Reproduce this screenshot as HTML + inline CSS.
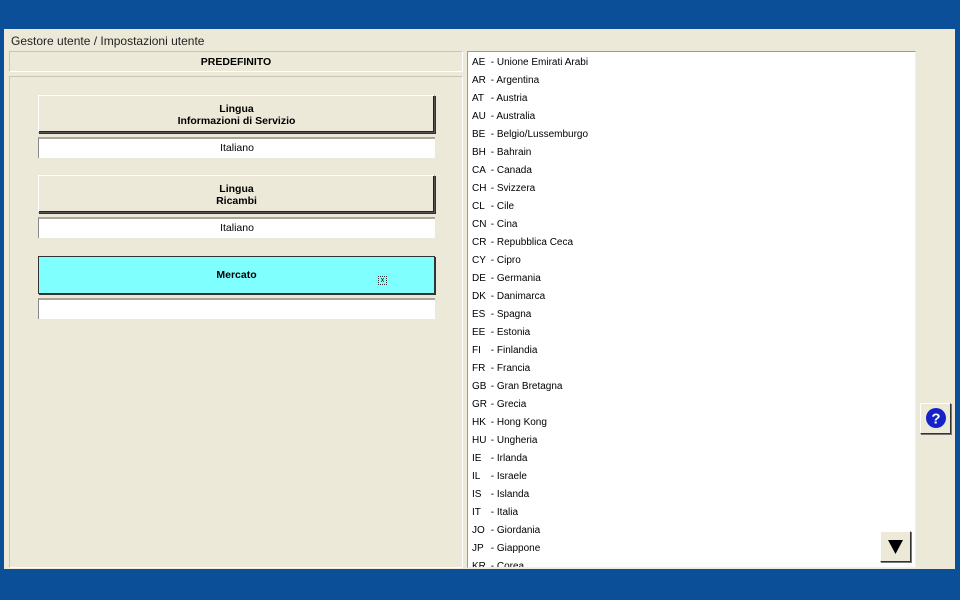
<!DOCTYPE html>
<html><head><meta charset="utf-8"><style>
*{margin:0;padding:0;box-sizing:border-box}
body{width:960px;height:600px;background:#0a4f97;position:relative;overflow:hidden;font-family:"Liberation Sans",sans-serif;font-size:11px;color:#000}
.abs{position:absolute}
#main{left:4px;top:29px;width:951px;height:540px;background:#ece9d8}
.title{left:11px;top:34px;font-size:12px;color:#222}
.hdr{left:9px;top:51px;width:454px;height:21px;border:1px solid #c9c6b6;border-right-color:#fff;border-bottom-color:#fff;text-align:center;font-weight:bold;line-height:21px;font-size:10.5px}
.panel{left:9px;top:76px;width:454px;height:492px;border:1px solid #c9c6b6;border-right-color:#fff;border-bottom-color:#fff}
.btn{left:38px;width:397px;height:38px;background:#ece9d8;border:1px solid #555;border-top-color:#fff;border-left-color:#fff;box-shadow:inset -1px -1px 0 #222,1px 1px 0 #333;text-align:center;font-weight:bold;line-height:12px;padding-top:6px;font-size:10.5px}
.fld{left:38px;width:397px;height:21px;background:#fff;border-top:2px solid #aaa69a;border-left:1px solid #888;text-align:center;line-height:19px;font-size:10.5px}
.list{left:467px;top:51px;width:449px;height:517px;background:#fff;border:1px solid #999;border-right-color:#eee;border-bottom-color:#eee;overflow:hidden;font-size:10px}
.row{position:absolute;left:4px;height:18px;line-height:18px;white-space:nowrap;margin-top:1px}
.row b{font-weight:normal;display:inline-block;width:16px}
</style></head><body>
<div id="main" class="abs"></div>
<div class="abs title">Gestore utente / Impostazioni utente</div>
<div class="abs hdr">PREDEFINITO</div>
<div class="abs panel"></div>
<div class="abs btn" style="top:95px;padding-top:7px">Lingua<br>Informazioni di Servizio</div>
<div class="abs fld" style="top:137px">Italiano</div>
<div class="abs btn" style="top:175px;padding-top:7px">Lingua<br>Ricambi</div>
<div class="abs fld" style="top:217px">Italiano</div>
<div class="abs btn" style="top:256px;background:#80ffff;border-color:#333;box-shadow:1px 1px 0 #333;padding-top:12px">Mercato</div>
<div class="abs" style="left:378px;top:276px;width:9px;height:9px;border:1px dotted #333;font-size:7px;line-height:7px;text-align:center">x</div>
<div class="abs fld" style="top:298px"></div>
<div class="abs list">
<div class="row" style="top:1px"><b>AE</b> - Unione Emirati Arabi</div>
<div class="row" style="top:19px"><b>AR</b> - Argentina</div>
<div class="row" style="top:37px"><b>AT</b> - Austria</div>
<div class="row" style="top:55px"><b>AU</b> - Australia</div>
<div class="row" style="top:73px"><b>BE</b> - Belgio/Lussemburgo</div>
<div class="row" style="top:91px"><b>BH</b> - Bahrain</div>
<div class="row" style="top:109px"><b>CA</b> - Canada</div>
<div class="row" style="top:127px"><b>CH</b> - Svizzera</div>
<div class="row" style="top:145px"><b>CL</b> - Cile</div>
<div class="row" style="top:163px"><b>CN</b> - Cina</div>
<div class="row" style="top:181px"><b>CR</b> - Repubblica Ceca</div>
<div class="row" style="top:199px"><b>CY</b> - Cipro</div>
<div class="row" style="top:217px"><b>DE</b> - Germania</div>
<div class="row" style="top:235px"><b>DK</b> - Danimarca</div>
<div class="row" style="top:253px"><b>ES</b> - Spagna</div>
<div class="row" style="top:271px"><b>EE</b> - Estonia</div>
<div class="row" style="top:289px"><b>FI</b> - Finlandia</div>
<div class="row" style="top:307px"><b>FR</b> - Francia</div>
<div class="row" style="top:325px"><b>GB</b> - Gran Bretagna</div>
<div class="row" style="top:343px"><b>GR</b> - Grecia</div>
<div class="row" style="top:361px"><b>HK</b> - Hong Kong</div>
<div class="row" style="top:379px"><b>HU</b> - Ungheria</div>
<div class="row" style="top:397px"><b>IE</b> - Irlanda</div>
<div class="row" style="top:415px"><b>IL</b> - Israele</div>
<div class="row" style="top:433px"><b>IS</b> - Islanda</div>
<div class="row" style="top:451px"><b>IT</b> - Italia</div>
<div class="row" style="top:469px"><b>JO</b> - Giordania</div>
<div class="row" style="top:487px"><b>JP</b> - Giappone</div>
<div class="row" style="top:505px"><b>KR</b> - Corea</div>
</div>
<div class="abs" style="left:880px;top:531px;width:31px;height:31px;background:#ece9d8;border:1px solid #fff;border-right-color:#333;border-bottom-color:#333;box-shadow:1px 1px 0 #777">
<svg width="29" height="29" style="position:absolute;left:0;top:0"><polygon points="7,8 22,8 14.5,22" fill="#000"/></svg></div>
<div class="abs" style="left:920px;top:403px;width:31px;height:31px;background:#ece9d8;border:1px solid #fff;border-right-color:#333;border-bottom-color:#333;box-shadow:1px 1px 0 #777">
<svg width="29" height="29" style="position:absolute;left:0;top:0"><circle cx="15" cy="14" r="10" fill="#1522c8"/><text x="15" y="19.5" font-family="Liberation Sans" font-weight="bold" font-size="15" fill="#fff" text-anchor="middle">?</text></svg></div>
</body></html>
